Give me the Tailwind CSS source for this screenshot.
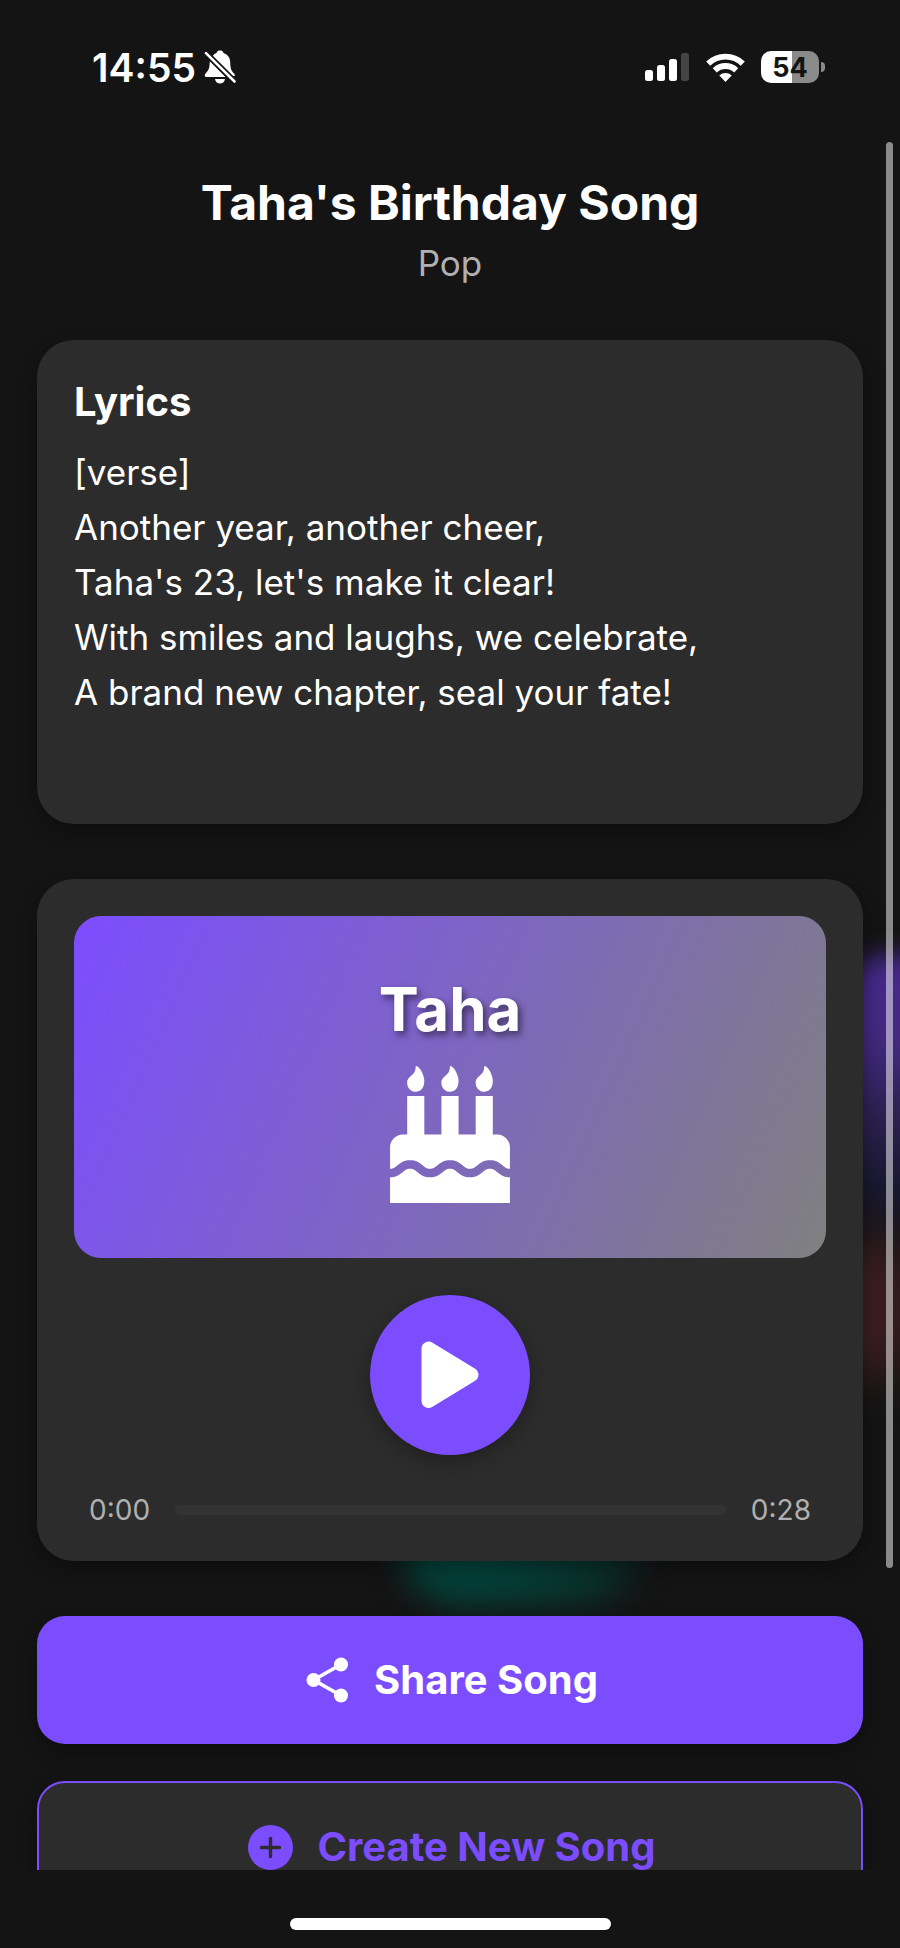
<!DOCTYPE html>
<html lang="en">
<head>
<meta charset="utf-8">
<meta name="viewport" content="width=device-width, initial-scale=1">
<title>Taha's Birthday Song</title>
<script src="https://cdn.jsdelivr.net/npm/@tailwindcss/browser@4"></script>
</head>
<body class="bg-[#141414] text-white font-['Inter',sans-serif]">
<div class="relative isolate flex h-screen flex-col overflow-hidden">

  <!-- Blurred background glows -->
  <div class="absolute inset-0 -z-10" aria-hidden="true">
    <div class="absolute -right-24 top-[955px] h-[290px] w-[150px] rounded-[40px] bg-[linear-gradient(180deg,#46298c,#43297f_30%,#2c2150_55%,#191830_80%,#141414)] blur-md"></div>
    <div class="absolute -right-2 top-[1235px] h-36 w-20 rounded-full bg-[#4a2226]/80 blur-xl"></div>
    <div class="absolute left-[400px] top-[1480px] h-32 w-60 rounded-full bg-[radial-gradient(ellipse_at_25%_62%,#00483e,#073a34_40%,#0d2522_75%,#141414)] blur-lg"></div>
  </div>

  <header class="flex h-[140px] shrink-0 items-start justify-between pl-[92px] pr-[75px] pt-[46px]">
    <div class="flex h-[42px] items-center gap-2">
      <time class="text-[39px] font-semibold leading-none">14:55</time>
      <svg class="h-[34px] w-[32px]" viewBox="0 0 32 34" fill="#fff" role="img" aria-label="Silent mode">
        <path d="M8 7C9.500 4.500 11 3.500 12.500 3C13 1 14.500 .5 16 .5s3 .5 3.500 2.500C24 4.500 26 8 26.200 12c.2 6 .8 8.500 3.800 11.500.8.8 1 1.500.7 2.500H28Z"/>
        <path d="M5.800 10.500L21.800 27H2.500C.5 27 .2 25 1.500 23.500 5 20 5.600 18 5.800 10.500Z"/>
        <path d="M11 29h10c-.5 3-2.500 4.500-5 4.500S11.500 32 11 29Z"/>
        <path d="M2 3.200L30.500 31.500" stroke="#141414" stroke-width="6"/>
        <path d="M2 3.200L30.500 31.500" stroke="#fff" stroke-width="2.600" stroke-linecap="round"/>
      </svg>
    </div>
    <div class="flex h-[42px] items-center">
      <svg class="h-7 w-11" viewBox="0 0 44 28" fill="#fff" role="img" aria-label="Signal strength">
        <rect y="17" width="8" height="11" rx="2.500"/><rect x="12" y="12" width="8" height="16" rx="2.500"/>
        <rect x="24" y="6" width="8" height="22" rx="2.500"/><rect x="36" width="8" height="28" rx="2.500" fill="#444"/>
      </svg>
      <svg class="ml-[17px] h-[29px] w-[39px]" viewBox="0 0 39 29" role="img" aria-label="Wi-Fi">
        <g fill="none" stroke="#fff" stroke-width="5.800">
          <path d="M2.200 10.600A25 25 0 0 1 36.800 10.600"/>
          <path d="M8.800 17.300A15.500 15.500 0 0 1 30.200 17.300"/>
        </g>
        <path d="M19.500 29L13.300 22.400A9 9 0 0 1 25.700 22.400Z" fill="#fff"/>
      </svg>
      <div class="ml-4 flex items-center gap-0.5" aria-label="Battery 54 percent">
        <div class="flex h-8 w-[58px] items-center justify-center rounded-[10px] bg-[linear-gradient(90deg,#fff_54%,#8a8a8a_54%)] text-[27px] font-bold leading-none text-[#141414]">54</div>
        <div class="h-[10px] w-1 rounded-r-full bg-[#8a8a8a]"></div>
      </div>
    </div>
  </header>

  <main class="min-h-0 flex-1 overflow-hidden px-[37px]">
    <div class="pt-[31px] text-center">
      <h1 class="text-[48px] font-bold leading-[64px]">Taha's Birthday Song</h1>
      <p class="mt-0.5 text-[35px] leading-[52px] text-[#b0b0b0]">Pop</p>
    </div>

    <section class="mt-[51px] rounded-[37px] bg-[#2c2c2c] px-[37px] pb-[104px] pt-9 shadow-[0_8px_20px_rgba(0,0,0,0.35)]">
      <h2 class="text-[40px] font-bold leading-[52px]">Lyrics</h2>
      <p class="mt-[17px] text-[35px] leading-[55px]">[verse]<br>Another year, another cheer,<br>Taha's 23, let's make it clear!<br>With smiles and laughs, we celebrate,<br>A brand new chapter, seal your fate!</p>
    </section>

    <section class="mt-[55px] rounded-[37px] bg-[#2c2c2c] px-[37px] pb-[33px] pt-[37px] shadow-[0_8px_20px_rgba(0,0,0,0.35)]">
      <div class="flex h-[342px] flex-col items-center rounded-[27px] bg-[linear-gradient(114deg,#7c4dff,#808080)] pt-[55px]">
        <div class="text-[60px] font-bold leading-[76px] [text-shadow:3px_4px_7px_rgba(0,0,0,0.5)]">Taha</div>
        <svg class="mt-[19px] h-[137px] w-[120px]" viewBox="0 0 448 512" fill="#fff" aria-hidden="true">
          <path d="M448 384c-28.020 0-31.260-32-74.500-32-43.430 0-46.825 32-74.750 32-27.695 0-31.454-32-74.750-32-42.842 0-47.218 32-74.500 32-28.148 0-31.202-32-74.750-32-43.547 0-46.653 32-74.750 32v-80c0-26.500 21.500-48 48-48h16V112h64v144h64V112h64v144h64V112h64v144h16c26.500 0 48 21.500 48 48v80zm0 128H0v-96c43.356 0 46.767-32 74.750-32 27.951 0 31.253 32 74.750 32 42.843 0 47.217-32 74.500-32 28.148 0 31.201 32 74.750 32 43.357 0 46.767-32 74.750-32 27.488 0 31.252 32 74.500 32v96zM96 96c-17.750 0-32-14.250-32-32 0-31 32-23 32-64 12 0 32 29.500 32 56s-14.250 40-32 40zm128 0c-17.750 0-32-14.250-32-32 0-31 32-23 32-64 12 0 32 29.500 32 56s-14.250 40-32 40zm128 0c-17.750 0-32-14.250-32-32 0-31 32-23 32-64 12 0 32 29.500 32 56s-14.250 40-32 40z"/>
        </svg>
      </div>
      <button type="button" aria-label="Play" class="mx-auto mt-[37px] block size-40 rounded-full bg-[#7c4dff] shadow-[0_6px_20px_rgba(0,0,0,0.3)]">
        <svg class="size-full" viewBox="0 0 160 160" fill="#fff" stroke="#fff" stroke-width="14" stroke-linejoin="round" aria-hidden="true">
          <path d="M58.500 53.500V106L101.500 79.800Z"/>
        </svg>
      </button>
      <div class="mt-[37px] flex items-center justify-between gap-[25px] px-[15px] text-[28px] leading-9 text-[#b0b0b0]">
        <span>0:00</span>
        <input type="range" min="0" max="28" value="0" aria-label="Playback position" class="h-[10px] min-w-0 flex-1 appearance-none rounded-full bg-[#333] [&::-webkit-slider-thumb]:size-0 [&::-webkit-slider-thumb]:appearance-none">
        <span>0:28</span>
      </div>
    </section>

    <button type="button" class="mt-[55px] flex h-32 w-full items-center justify-center gap-[26px] rounded-[28px] bg-[#7c4dff] pl-1 text-[40px] font-bold shadow-[0_8px_20px_rgba(0,0,0,0.35)]">
      <svg class="h-[46px] w-[42px]" viewBox="0 0 42 46" fill="#fff" stroke="#fff" aria-hidden="true">
        <path d="M35 7.500L7.500 23 35 38.500" fill="none" stroke-width="3.600"/>
        <g stroke="none"><circle cx="35" cy="7.500" r="7"/><circle cx="7.500" cy="23" r="7"/><circle cx="35" cy="38.500" r="7"/></g>
      </svg>
      Share Song
    </button>
    <button type="button" class="mt-[37px] flex h-[132px] w-full items-center justify-center gap-6 rounded-[28px] border-2 border-[#7c4dff] bg-[#2c2c2c] pl-1 text-[40px] font-bold text-[#7c4dff] shadow-[0_8px_20px_rgba(0,0,0,0.35)]">
      <svg class="size-[45px]" viewBox="0 0 45 45" aria-hidden="true">
        <circle cx="22.500" cy="22.500" r="22.500" fill="#7c4dff"/>
        <path d="M22.500 13.500v18M13.500 22.500h18" stroke="#2c2c2c" stroke-width="3.400" stroke-linecap="round"/>
      </svg>
      Create New Song
    </button>
  </main>

  <footer class="flex h-[78px] shrink-0 justify-center bg-[#141414] pt-12">
    <div class="h-3 w-[321px] rounded-full bg-white"></div>
  </footer>

  <!-- Scroll indicator -->
  <div class="absolute right-[7px] top-[142px] bottom-[380px] w-[7px] rounded-full bg-white/50"></div>
</div>
</body>
</html>
